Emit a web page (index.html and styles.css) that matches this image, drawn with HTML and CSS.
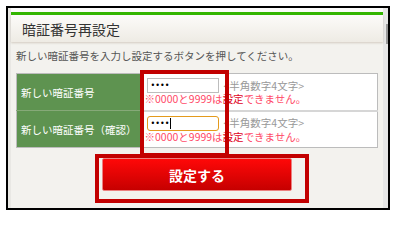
FILE: index.html
```html
<!DOCTYPE html>
<html lang="ja">
<head>
<meta charset="utf-8">
<title>暗証番号再設定</title>
<link rel="stylesheet" href="styles.css">
</head>
<body>
<div class="frame">
  <div class="page">
    <div class="panel">
      <div class="header"><h1 class="title">暗証番号再設定</h1></div>
      <p class="lead">新しい暗証番号を入力し設定するボタンを押してください。</p>
      <table class="form">
        <tr>
          <th class="label">新しい暗証番号</th>
          <td class="field">
            <div class="line"><input class="pin" type="password" value="1234"><span class="hint">&lt;半角数字4文字&gt;</span></div>
            <div class="note">※0000と9999は<span class="strong">設定</span>できません。</div>
          </td>
        </tr>
        <tr>
          <th class="label">新しい暗証番号（確認）</th>
          <td class="field">
            <div class="line"><input class="pin focus" type="password" value="1234"><span class="caret"></span><span class="hint">&lt;半角数字4文字&gt;</span></div>
            <div class="note">※0000と9999は<span class="strong">設定</span>できません。</div>
          </td>
        </tr>
      </table>
      <div class="actions"><button class="submit" type="button">設定する</button></div>
      <div class="mark mark-inputs"></div>
      <div class="mark mark-button"></div>
    </div>
  </div>
  <div class="scroll"><div class="thumb"></div></div>
</div>
</body>
</html>
```
FILE: styles.css
```css
html, body {
  margin: 0;
  padding: 0;
  background: #ffffff;
}
body {
  font-family: "Noto Sans CJK JP", "Noto Sans", sans-serif;
}
.frame {
  margin: 6px 0 0 6px;
  width: 380px;
  height: 200px;
  border: 2px solid #000;
  display: flex;
  overflow: hidden;
}
.page {
  flex: 1;
  background: #f3f2ee;
  border-left: 3px solid #e9e8e4;
  padding-top: 4px;
  box-sizing: border-box;
  position: relative;
  background-clip: padding-box;
}
.page::before {
  content: "";
  position: absolute;
  left: 0; right: 0; top: 0;
  height: 4px;
  background: #fbfbfa;
}
.panel {
  position: relative;
  border-top: 3px solid #33b600;
}
.header {
  height: 27px;
  background: linear-gradient(#fcfbf9, #eeebe4);
  box-shadow: 0 1px 2px rgba(150, 130, 110, 0.35);
  display: flex;
  align-items: center;
  padding-left: 11px;
}
.title {
  margin: 0;
  font-size: 14px;
  font-weight: normal;
  color: #333;
  line-height: 1;
  letter-spacing: 0;
}
.lead {
  margin: 7px 0 0 5px;
  font-size: 10.5px;
  line-height: 14px;
  color: #555;
}
.form {
  margin: 10px 0 0 5px;
  width: 362px;
  border-collapse: collapse;
  border: 1px solid #bcbcbc;
  background: #fff;
}
.form tr + tr th { border-top: 1px solid #86a978; }
.form tr + tr td { border-top: 2px solid #d6d6d6; }
.label {
  width: 126px;
  height: 37px;
  padding: 0 0 0 4px;
  box-sizing: border-box;
  background: #5e9350;
  color: #fff;
  font-weight: normal;
  font-size: 10.5px;
  text-align: left;
  vertical-align: middle;
  white-space: nowrap;
}
.field {
  padding: 4px 0 2px 4px;
  vertical-align: top;
}
.line {
  display: flex;
  align-items: center;
  position: relative;
}
.pin {
  width: 72px;
  height: 15px;
  box-sizing: border-box;
  border: 1px solid #bdbdbd;
  background: #fff;
  padding: 0 3px;
  font-size: 8px;
  letter-spacing: 0;
  margin: 0;
  outline: none;
  font-family: "DejaVu Sans", sans-serif;
}
.pin.focus {
  border: 1px solid #e49a1c;
  border-radius: 3px;
}
.caret {
  position: absolute;
  left: 23px;
  top: 2px;
  width: 1px;
  height: 11px;
  background: #000;
}
.hint {
  margin-left: 5px;
  font-size: 10.5px;
  color: #999;
  line-height: 14px;
}
.note {
  margin-top: 0;
  margin-left: -2px;
  font-size: 10.5px;
  line-height: 12px;
  color: #ff4a68;
  white-space: nowrap;
}
.note .strong { color: #e0001a; }
.actions {
  display: flex;
  justify-content: center;
  margin-top: 10px;
}
.submit {
  width: 190px;
  height: 33px;
  border: 1px solid #ec8080;
  border-radius: 2px;
  background: linear-gradient(#ff0808, #c60000);
  color: #fff;
  font-family: "Noto Sans CJK JP", sans-serif;
  font-weight: bold;
  font-size: 14px;
  letter-spacing: 0;
  padding: 0;
}
.mark {
  position: absolute;
  border: 4px solid #c20000;
  box-sizing: border-box;
  pointer-events: none;
}
.mark-inputs {
  left: 129px;
  top: 55px;
  width: 89px;
  height: 87px;
}
.mark-button {
  left: 84px;
  top: 139px;
  width: 214px;
  height: 49px;
}
.scroll {
  width: 5px;
  background: #e6e6e6;
}
.thumb {
  margin: 16px 0 0 3px;
  width: 2px;
  height: 20px;
  background: #9a9a9a;
}
```
